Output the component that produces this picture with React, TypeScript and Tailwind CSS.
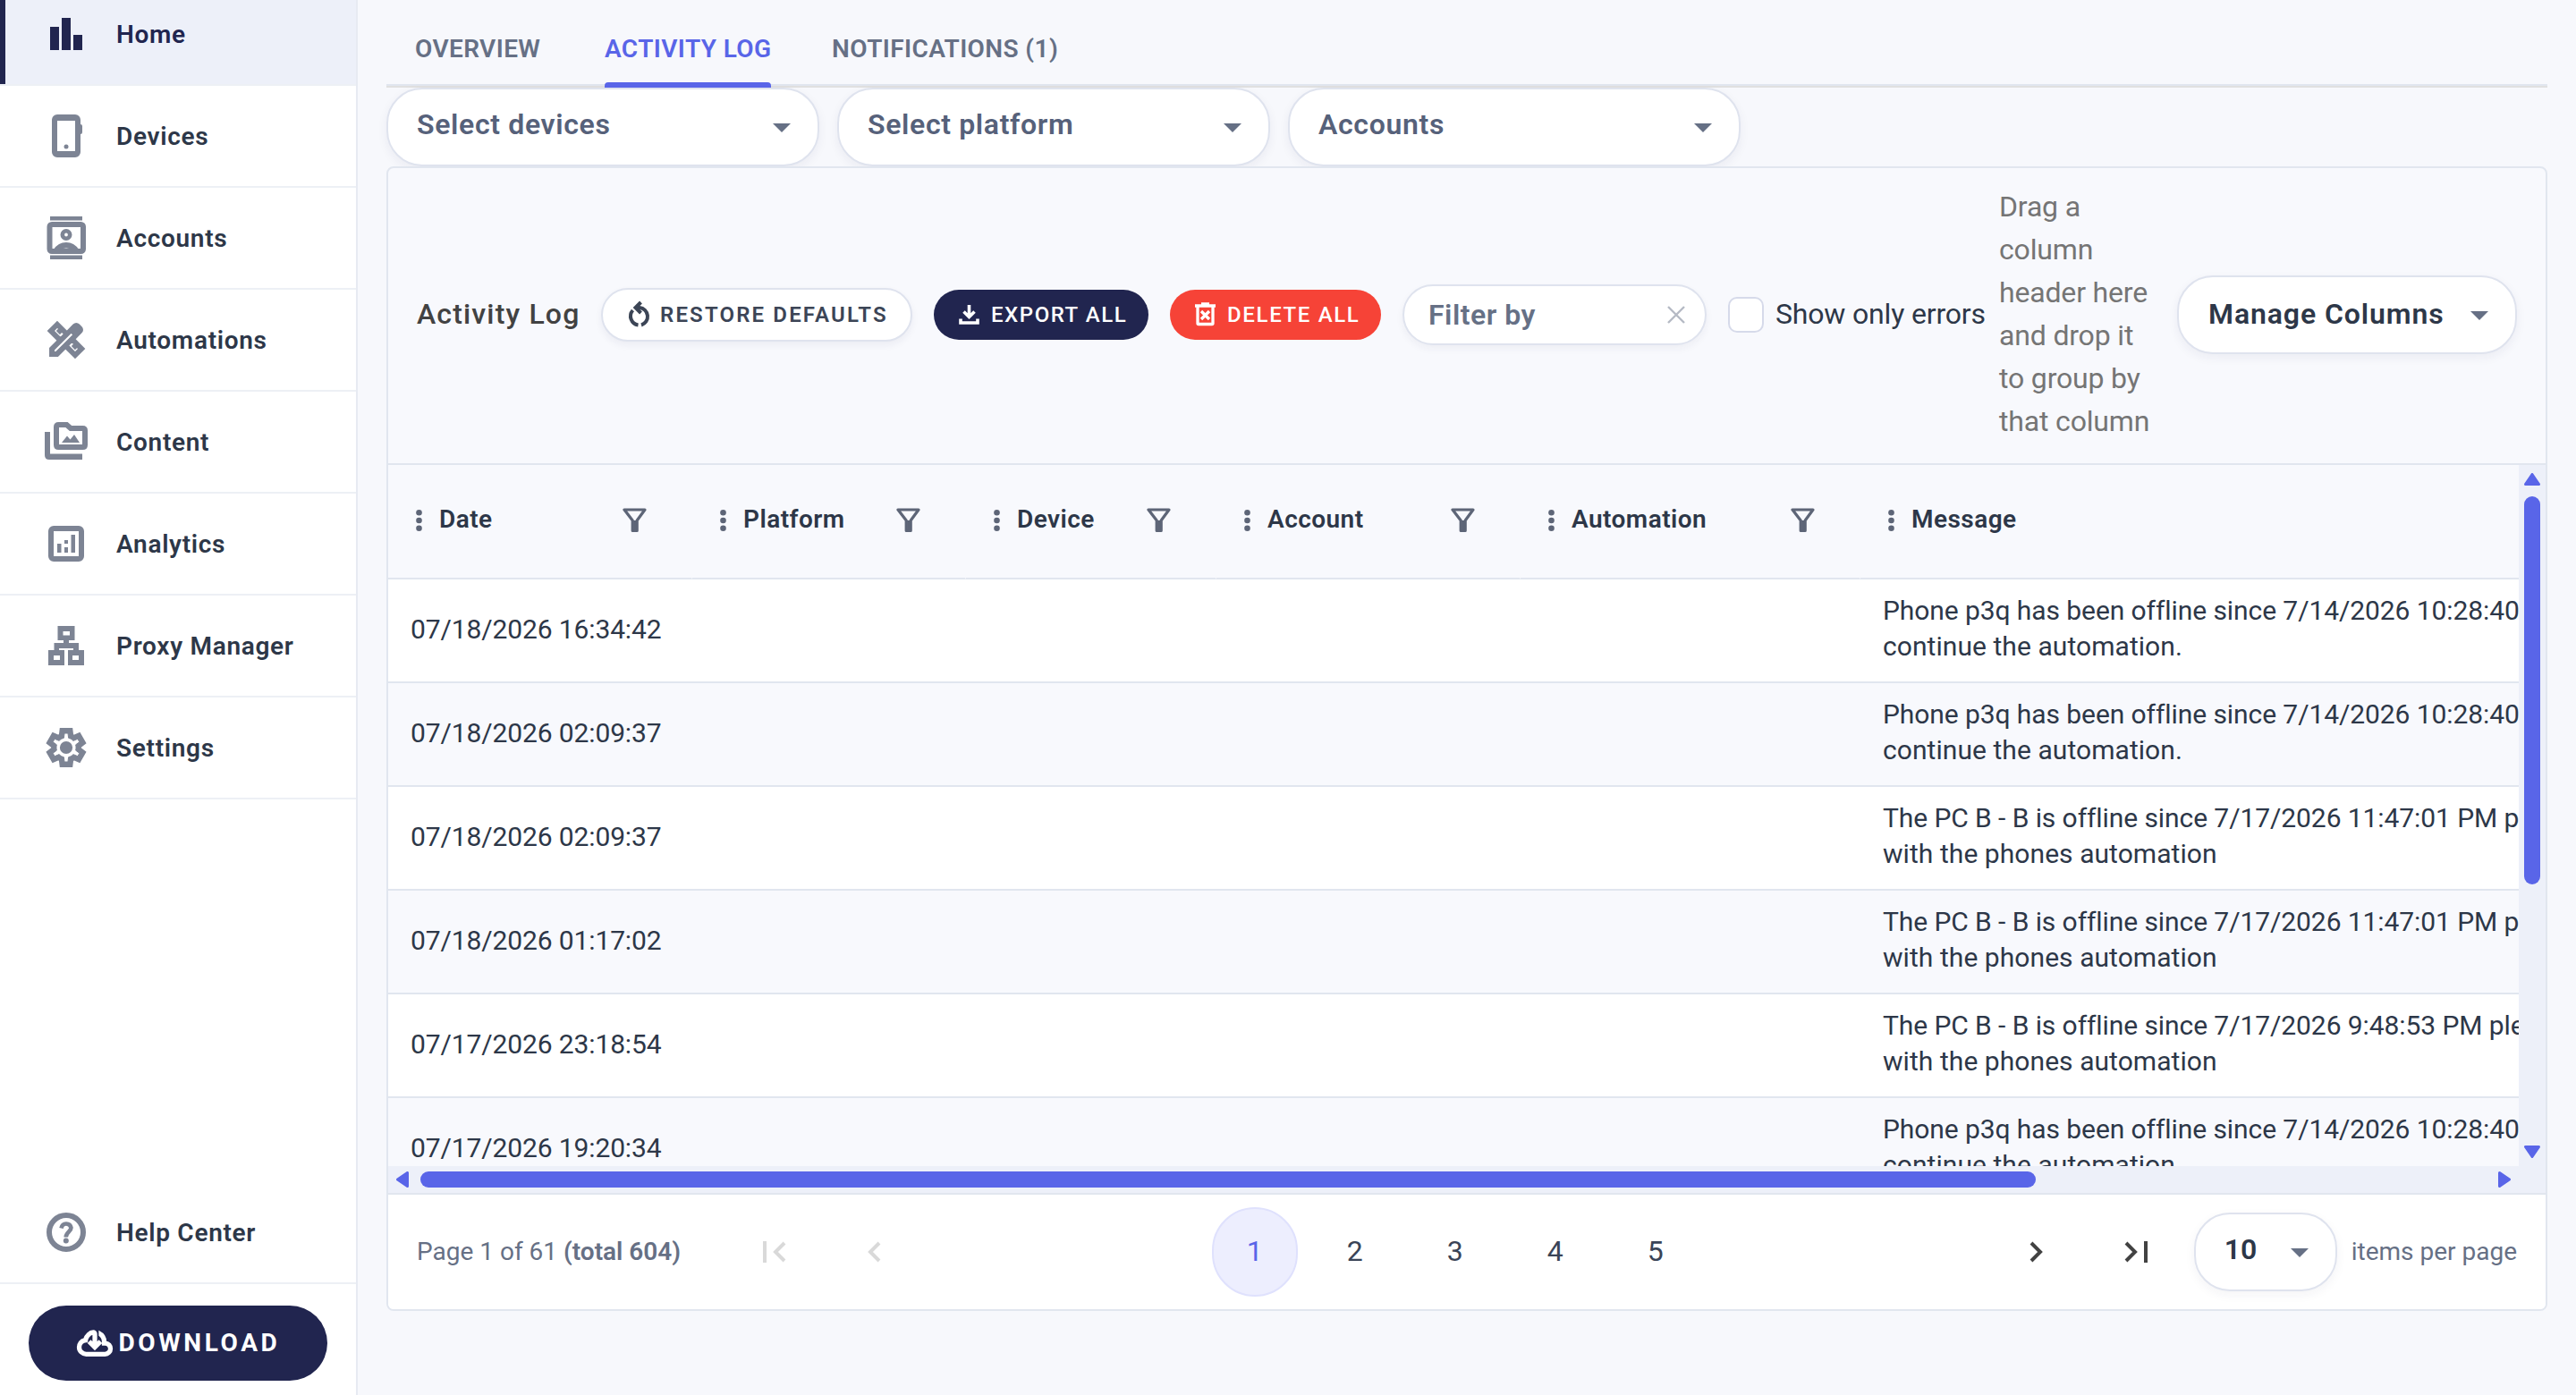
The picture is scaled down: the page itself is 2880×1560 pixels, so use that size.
import type { ReactNode } from 'react';

const menu = [
  { label: 'Home', icon: <HomeIcon />, active: true },
  { label: 'Devices', icon: <DeviceIcon /> },
  { label: 'Accounts', icon: <AccountsIcon /> },
  { label: 'Automations', icon: <AutomationsIcon /> },
  { label: 'Content', icon: <ContentIcon /> },
  { label: 'Analytics', icon: <AnalyticsIcon /> },
  { label: 'Proxy Manager', icon: <ProxyIcon /> },
  { label: 'Settings', icon: <SettingsIcon /> },
];

const columns = [
  { title: 'Date', width: 'w-[340px]' },
  { title: 'Platform', width: 'w-[306px]' },
  { title: 'Device', width: 'w-[280px]' },
  { title: 'Account', width: 'w-[340px]' },
  { title: 'Automation', width: 'w-[380px]' },
  { title: 'Message', width: 'w-[1200px]' },
];

const rows = [
  {
    date: '07/18/2026 16:34:42',
    message: [
      'Phone p3q has been offline since 7/14/2026 10:28:40 AM',
      'continue the automation.',
    ],
  },
  {
    date: '07/18/2026 02:09:37',
    message: [
      'Phone p3q has been offline since 7/14/2026 10:28:40 AM',
      'continue the automation.',
    ],
  },
  {
    date: '07/18/2026 02:09:37',
    message: [
      'The PC B - B is offline since 7/17/2026 11:47:01 PM please',
      'with the phones automation',
    ],
  },
  {
    date: '07/18/2026 01:17:02',
    message: [
      'The PC B - B is offline since 7/17/2026 11:47:01 PM please',
      'with the phones automation',
    ],
  },
  {
    date: '07/17/2026 23:18:54',
    message: [
      'The PC B - B is offline since 7/17/2026 9:48:53 PM please',
      'with the phones automation',
    ],
  },
  {
    date: '07/17/2026 19:20:34',
    message: [
      'Phone p3q has been offline since 7/14/2026 10:28:40 AM',
      'continue the automation.',
    ],
  },
];

export default function App() {
  return (
    <div className="flex h-[1560px] w-[2880px] overflow-hidden bg-[#f7f8fc] font-[Roboto,sans-serif] text-[#2d3748]">
      <Sidebar />
      <main className="flex flex-1 flex-col px-8">
        <Tabs />
        <div className="flex gap-5">
          <Select className="w-[484px]">Select devices</Select>
          <Select className="w-[484px]">Select platform</Select>
          <Select className="w-[506px]">Accounts</Select>
        </div>
        <section className="z-10 flex h-[1280px] flex-col overflow-hidden rounded-lg border-2 border-[#e1e6ef] bg-[#f8f9fd]">
          <Toolbar />
          <Grid />
          <Pager />
        </section>
      </main>
    </div>
  );
}

function Sidebar() {
  return (
    <aside className="flex w-[400px] flex-col border-r-2 border-[#e7eaf2] bg-white">
      <nav className="-mt-[18px] flex flex-col">
        {menu.map((item) => (
          <MenuItem key={item.label} {...item} />
        ))}
      </nav>
      <div className="mt-auto">
        <MenuItem label="Help Center" icon={<HelpIcon />} />
        <div className="px-8 pt-6 pb-4">
          <button className="flex h-[84px] w-[334px] items-center justify-center gap-1.5 rounded-full bg-[#21254f] text-[28px] font-bold tracking-[3.6px] text-white">
            <CloudIcon />
            DOWNLOAD
          </button>
        </div>
      </div>
    </aside>
  );
}

type MenuItemProps = { label: string; icon: ReactNode; active?: boolean };

function MenuItem({ label, icon, active }: MenuItemProps) {
  return (
    <a
      className={
        active
          ? 'flex h-[114px] items-center border-b-2 border-[#edf0f5] bg-[#edf0f9] text-[#21254f]'
          : 'flex h-[114px] items-center border-b-2 border-[#edf0f5] text-[#7d8494]'
      }
    >
      <span
        className={active ? 'h-full w-1.5 bg-[#21254f]' : 'h-full w-1.5'}
      />
      <span className="ml-11">{icon}</span>
      <span
        className={
          active
            ? 'ml-8 pt-0.5 text-[28px] font-semibold tracking-[0.7px]'
            : 'ml-8 pt-0.5 text-[28px] font-semibold tracking-[0.7px] text-[#2d3748]'
        }
      >
        {label}
      </span>
    </a>
  );
}

function Tabs() {
  return (
    <div className="flex h-[98px] gap-[68px] border-b-2 border-[#e0e0e0] px-8 text-[28px] font-semibold tracking-[0.4px] whitespace-nowrap text-[#667085] shadow-[inset_0_-2px_0_#e1e6ef]">
      <span className="w-36 pt-[34px]">OVERVIEW</span>
      <span className="relative w-[186px] pt-[34px] text-[#5965e8]">
        ACTIVITY LOG
        <i className="absolute inset-x-0 top-[92px] h-1.5 rounded-t bg-[#5965e8]" />
      </span>
      <span className="pt-[34px]">NOTIFICATIONS (1)</span>
    </div>
  );
}

function Select({
  children,
  className,
}: {
  children: ReactNode;
  className: string;
}) {
  return (
    <div
      className={`flex h-[88px] items-center justify-between rounded-[40px] border-2 border-[#dfe3ee] bg-white pr-[30px] pl-8 text-[32px] font-semibold tracking-[0.65px] text-[#56617a] shadow-[0_4px_12px_rgba(30,40,80,0.06)] ${className}`}
    >
      <span className="-mt-1.5">{children}</span>
      <Caret />
    </div>
  );
}

function Toolbar() {
  return (
    <div className="flex h-[332px] shrink-0 items-center border-b-2 border-[#e1e6ef] pr-8 pb-0.5 pl-8">
      <h1 className="w-[206px] pb-0.5 text-[32px] font-medium tracking-[1.15px] whitespace-nowrap text-[#424242]">
        Activity Log
      </h1>
      <div className="flex items-center gap-6 text-2xl font-medium">
        <button className="flex h-[60px] w-[348px] items-center rounded-full border-2 border-[#dfe3ee] bg-white pl-[25px] font-semibold tracking-[2.15px] whitespace-nowrap text-[#3c4556] shadow-[0_4px_8px_rgba(30,40,80,0.06)]">
          <RestoreIcon />
          <span className="ml-[7px]">RESTORE DEFAULTS</span>
        </button>
        <button className="flex h-14 w-60 items-center rounded-full bg-[#21254f] pl-6 tracking-[1.55px] text-white">
          <ExportIcon />
          <span className="ml-2">EXPORT ALL</span>
        </button>
        <button className="flex h-14 w-[236px] items-center rounded-full bg-[#f64337] pl-6 tracking-[1.65px] text-white">
          <TrashIcon />
          <span className="ml-2">DELETE ALL</span>
        </button>
        <div className="flex h-[68px] w-[340px] items-center justify-between rounded-full border-2 border-[#dfe3ee] bg-white pr-[22px] pl-[27px] text-[32px] font-semibold tracking-[0.5px] text-[#667085] shadow-[0_4px_8px_rgba(30,40,80,0.05)]">
          Filter by
          <svg className="size-5" viewBox="0 0 20 20">
            <path
              d="M1 1 19 19M19 1 1 19"
              stroke="#b5bac4"
              strokeWidth="2.4"
              fill="none"
            />
          </svg>
        </div>
        <span className="size-10 rounded-[10px] border-2 border-[#d6daea] bg-white" />
      </div>
      <span className="ml-[13px] w-[250px] pb-0.5 text-[32px] tracking-[-0.17px] whitespace-nowrap">
        Show only errors
      </span>
      <p className="mr-auto w-[176px] pb-0.5 text-[32px] leading-[48px] tracking-[-0.17px] text-[#757575]">
        Drag a column header here and drop it to group by that column
      </p>
      <div className="flex h-[88px] w-[380px] items-center justify-between rounded-[40px] border-2 border-[#dfe3ee] bg-white pr-[30px] pl-[33px] text-[32px] font-semibold tracking-[0.9px] whitespace-nowrap shadow-[0_4px_12px_rgba(30,40,80,0.06)]">
        <span className="pb-0.5">Manage Columns</span>
        <Caret />
      </div>
    </div>
  );
}

function Grid() {
  return (
    <div className="flex h-[816px] shrink-0 flex-col border-b-2 border-[#e1e6ef]">
      <div className="flex h-[784px]">
        <div className="w-[2382px] overflow-hidden">
          <div className="flex w-[2846px]">
            {columns.map(({ title, width }) => (
              <div
                key={title}
                className={`flex h-32 shrink-0 items-center border-r border-b-2 border-r-transparent border-b-[#e1e6ef] pb-0.5 pl-[31px] text-[28px] font-semibold tracking-[0.45px] ${width}`}
              >
                <DotsIcon />
                <span className="ml-[19px] pb-0.5">{title}</span>
                {title !== 'Message' && <FilterIcon />}
              </div>
            ))}
          </div>
          {rows.map(({ date, message }, i) => (
            <div
              key={i}
              className="flex h-[116px] w-[2846px] border-b-2 border-[#e1e6ef] pb-1 text-[30px] odd:bg-[#f8f9fd] even:bg-white"
            >
              <div className="flex w-[1646px] shrink-0 items-center pl-[25px] tracking-[-0.12px]">
                {date}
              </div>
              <div className="flex flex-col justify-center pl-[25px] leading-10 whitespace-nowrap">
                <span className="tracking-[-0.08px]">{message[0]}</span>
                <span className="tracking-[0.06px]">{message[1]}</span>
              </div>
            </div>
          ))}
        </div>
        <div className="flex w-[30px] flex-col items-center bg-[#edf0f9] pt-[9px] pb-[9px]">
          <ScrollArrow />
          <i className="mt-3 h-[434px] w-[18px] rounded-full bg-[#5965e8]" />
          <ScrollArrow className="mt-auto rotate-180" />
        </div>
      </div>
      <div className="flex h-[30px] items-center bg-[#edf0f9] pr-[37px] pl-[7px]">
        <ScrollArrow className="-rotate-90" />
        <i className="ml-[11px] h-[18px] w-[1806px] rounded-full bg-[#5965e8]" />
        <ScrollArrow className="ml-auto rotate-90" />
      </div>
    </div>
  );
}

function Pager() {
  return (
    <div className="flex flex-1 items-center bg-white pr-8 pl-8 text-[28px] text-[#667085]">
      <span className="w-[362px] whitespace-nowrap">
        Page 1 of 61 <b className="font-semibold">(total 604)</b>
      </span>
      <div className="flex flex-1 items-center">
        <PageArrow bar className="ml-[25px] text-[#d9d9d9]" />
        <PageArrow className="ml-[90px] text-[#d9d9d9]" />
      </div>
      <div className="flex items-center text-[32px] text-[#3a4457]">
        <span className="flex h-[100px] w-24 items-center justify-center rounded-full border-2 border-[#dfe1fd] bg-[#edeefe] pb-[3px] text-[#5965e8]">
          1
        </span>
        {[2, 3, 4, 5].map((page) => (
          <span key={page} className="ml-4 w-24 pb-[3px] text-center">
            {page}
          </span>
        ))}
      </div>
      <div className="flex w-[502px] items-center justify-end text-[#424242]">
        <PageArrow className="rotate-180" />
        <PageArrow bar className="ml-[90px] rotate-180" />
      </div>
      <div className="ml-[52px] flex h-[88px] w-40 items-center justify-between rounded-[40px] border-2 border-[#dfe3ee] bg-white pr-[30px] pl-8 text-[32px] font-semibold text-[#2d3748] shadow-[0_4px_12px_rgba(30,40,80,0.05)]">
        <span className="-mt-1.5">10</span>
        <Caret />
      </div>
      <span className="ml-4 whitespace-nowrap">items per page</span>
    </div>
  );
}

function Caret() {
  return (
    <svg className="mt-0.5 h-2.5 w-5" viewBox="0 0 20 10">
      <path d="M0 0h20L10 10z" fill="#667085" />
    </svg>
  );
}

function ScrollArrow({ className = '' }: { className?: string }) {
  return (
    <svg className={`h-3.5 w-[18px] ${className}`} viewBox="0 0 18 14">
      <path
        d="M9 1.5 16.5 12.5H1.5z"
        fill="#5965e8"
        stroke="#5965e8"
        strokeWidth="3"
        strokeLinejoin="round"
      />
    </svg>
  );
}

function PageArrow({ bar, className }: { bar?: boolean; className: string }) {
  return (
    <svg
      className={`h-6 ${bar ? 'w-[26px]' : 'w-4'} ${className}`}
      viewBox={bar ? '-10 0 26 24' : '0 0 16 24'}
      fill="none"
      stroke="currentColor"
      strokeWidth="4"
    >
      <path d="M14 2 4 12l10 10" />
      {bar && <path d="M-8 0v24" />}
    </svg>
  );
}

function DotsIcon() {
  return (
    <svg className="h-6 w-[7px]" viewBox="0 0 7 24" fill="#5d6577">
      <circle cx="3.5" cy="3.3" r="3.3" />
      <circle cx="3.5" cy="12" r="3.3" />
      <circle cx="3.5" cy="20.7" r="3.3" />
    </svg>
  );
}

function FilterIcon() {
  return (
    <svg
      className="mr-[50px] ml-auto h-7 w-[27px]"
      viewBox="0 0 27 28"
      fill="none"
      stroke="#5d6577"
      strokeWidth="3.2"
      strokeLinejoin="round"
    >
      <path d="M2 2h23l-8.8 12v11.5h-5V14z" />
      <path d="M13.7 14v12" />
    </svg>
  );
}

function HomeIcon() {
  return (
    <svg className="size-12" viewBox="0 0 48 48" fill="currentColor">
      <path d="M6 16h10v26H6zM19 6h10v36H19zM32 25h10v17H32z" />
    </svg>
  );
}

function DeviceIcon() {
  return (
    <svg className="size-12" viewBox="0 0 48 48" fill="currentColor">
      <path
        fillRule="evenodd"
        d="M14 0h20a6 6 0 0 1 6 6v5q2 0 2 2v7q0 2-2 2v20a6 6 0 0 1-6 6H14a6 6 0 0 1-6-6V6a6 6 0 0 1 6-6zm0 7v34h20V7z"
      />
      <circle cx="24" cy="36" r="2.5" />
    </svg>
  );
}

function AccountsIcon() {
  return (
    <svg className="size-12" viewBox="0 0 48 48" fill="currentColor">
      <path d="M6 0h36v4.5H6zM6 43.5h36V48H6z" />
      <rect
        x="5.5"
        y="9"
        width="37.5"
        height="30"
        rx="2.5"
        fill="none"
        stroke="currentColor"
        strokeWidth="6"
      />
      <circle
        cx="24"
        cy="20.5"
        r="4.2"
        fill="none"
        stroke="currentColor"
        strokeWidth="4.6"
      />
      <path d="M10 37q5-8 14-8t14 8h-7.5q-6.5-3-13 0z" />
    </svg>
  );
}

function AutomationsIcon() {
  return (
    <svg
      className="size-12"
      viewBox="0 -960 960 960"
      fill="currentColor"
      stroke="currentColor"
      strokeWidth="38"
    >
      <path d="m352-522 86-87-56-57-44 44-56-56 43-44-45-45-87 87 159 158Zm328 329 87-87-45-45-44 43-56-56 43-44-57-56-86 86 158 159ZM290-120H120v-170l175-175L80-680l200-200 216 216 151-152q12-12 27-18t31-6q16 0 31 6t27 18l53 54q12 12 18 27t6 31q0 16-6 30.5T816-647L665-495l215 215L680-80 465-295 290-120Zm-90-80h56l392-391-57-57-391 392v56Z" />
    </svg>
  );
}

function ContentIcon() {
  return (
    <svg className="size-12" viewBox="0 0 48 48" fill="currentColor">
      <path d="M0 13h6v24.5h36V44H5q-5 0-5-5z" />
      <path
        d="M15.500 5h9l4.500 4h13.500q2.500 0 2.500 2.500v16q0 2.500-2.500 2.500h-27q-2.500 0-2.500-2.500v-20Q13 5 15.500 5z"
        fill="none"
        stroke="currentColor"
        strokeWidth="6"
      />
      <path d="m19 25 6-7.500 3.500 4 4.500-5.500 6 9z" />
    </svg>
  );
}

function AnalyticsIcon() {
  return (
    <svg className="size-12" viewBox="0 0 48 48" fill="currentColor">
      <rect
        x="7"
        y="7"
        width="34"
        height="34"
        rx="3"
        fill="none"
        stroke="currentColor"
        strokeWidth="6"
      />
      <path d="M14 24h4.5v10H14zM22 20h4v4h-4zM22 28h4v6h-4zM29.5 14H34v20h-4.5z" />
    </svg>
  );
}

function ProxyIcon() {
  return (
    <svg className="size-12" viewBox="0 0 48 48" fill="currentColor">
      <path
        fillRule="evenodd"
        d="M14.5 2h19v16H27v3h11v8h6v17H26V29h6v-2H16v2h6v17H4V29h6.5v-8H21v-3h-6.5zM20.5 8v4.5h7.5V8zM10 35v5h7v-5zM31 35v5h7v-5z"
      />
    </svg>
  );
}

function SettingsIcon() {
  return (
    <svg
      className="size-12"
      viewBox="0 -960 960 960"
      fill="currentColor"
      stroke="currentColor"
    >
      <path
        strokeWidth="20"
        d="m370-80-16-128q-13-5-24.5-12T307-235l-119 50L78-375l103-78q-1-7-1-13.5v-27q0-6.5 1-13.5L78-585l110-190 119 50q11-8 23-15t24-12l16-128h220l16 128q13 5 24.5 12t22.5 15l119-50 110 190-103 78q1 7 1 13.5v27q0 6.5-2 13.5l103 78-110 190-118-50q-11 8-23 15t-24 12L590-80H370Zm70-80h79l14-106q31-8 57.5-23.5T639-327l99 41 39-68-86-65q5-14 7-29.5t2-31.5q0-16-2-31.5t-7-29.5l86-65-39-68-99 42q-22-23-48.5-38.5T533-694l-13-106h-79l-14 106q-31 8-57.5 23.5T321-633l-99-41-39 68 86 64q-5 15-7 30t-2 32q0 16 2 31t7 30l-86 65 39 68 99-42q22 23 48.5 38.5T427-266l13 106Z"
      />
      <path
        fill="none"
        strokeWidth="76"
        d="m370-80-16-128q-13-5-24.5-12T307-235l-119 50L78-375l103-78q-1-7-1-13.5v-27q0-6.5 1-13.5L78-585l110-190 119 50q11-8 23-15t24-12l16-128h220l16 128q13 5 24.5 12t22.5 15l119-50 110 190-103 78q1 7 1 13.5v27q0 6.5-2 13.5l103 78-110 190-118-50q-11 8-23 15t-24 12L590-80H370Z"
      />
      <circle cx="480" cy="-480" r="142" stroke="none" />
    </svg>
  );
}

function HelpIcon() {
  return (
    <svg
      className="size-12"
      viewBox="0 0 48 48"
      fill="none"
      stroke="currentColor"
    >
      <circle cx="24" cy="24" r="19" strokeWidth="6" />
      <path
        d="M18.5 19.5q1-5 5.5-5t5.5 4.500c0 4-5.800 5-5.800 10.500"
        strokeWidth="4.6"
      />
      <circle cx="23.8" cy="33.5" r="3" fill="currentColor" stroke="none" />
    </svg>
  );
}

function CloudIcon() {
  return (
    <svg
      className="size-[42px]"
      viewBox="0 -960 960 960"
      fill="currentColor"
      stroke="currentColor"
      strokeWidth="40"
    >
      <path d="M260-160q-91 0-155.5-63T40-377q0-78 47-139t123-78q17-72 85-137t145-65q33 0 56.5 23.5T520-716v242l64-62 56 56-160 160-160-160 56-56 64 62v-242q-76 14-118 73.5T280-520h-20q-58 0-99 41t-41 99q0 58 41 99t99 41h480q42 0 71-29t29-71q0-42-29-71t-71-29h-60v-80q0-48-22-89.5T600-680v-93q74 35 117 103.5T760-520q69 8 114.5 59.5T920-340q0 75-52.5 127.5T740-160H260Z" />
    </svg>
  );
}

function RestoreIcon() {
  return (
    <svg
      className="h-8 w-8"
      viewBox="0 0 32 32"
      fill="none"
      stroke="currentColor"
      strokeWidth="4"
    >
      <path d="M14.5 27.5A10 10 0 0 1 8.5 11M18 27.5A10 10 0 0 0 16 8h-3" />
      <path d="M17.5 2 11.5 8l6 6" />
    </svg>
  );
}

function ExportIcon() {
  return (
    <svg
      className="h-8 w-8"
      viewBox="0 0 32 32"
      fill="none"
      stroke="currentColor"
      strokeWidth="3.6"
    >
      <path d="M15.5 5v13M9.5 12.5l6 6 6-6M6 20.5V25h19v-4.5" />
    </svg>
  );
}

function TrashIcon() {
  return (
    <svg
      className="h-8 w-8"
      viewBox="0 0 32 32"
      fill="none"
      stroke="currentColor"
      strokeWidth="3.3"
    >
      <path d="M7 7v18.5q0 1 1 1h15q1 0 1-1V7M4 6h23M11 4h9M11 12l9 9M20 12l-9 9" />
    </svg>
  );
}
